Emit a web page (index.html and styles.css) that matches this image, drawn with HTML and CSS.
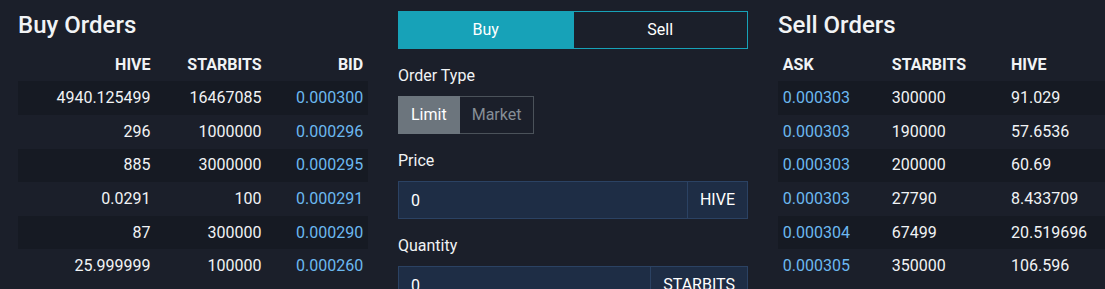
FILE: index.html
```html
<!DOCTYPE html>
<html lang="en">
<head>
    <meta charset="UTF-8">
    <meta name="viewport" content="width=device-width, initial-scale=1.0">
    <title>Market</title>
    <link rel="stylesheet" href="styles.css">
</head>
<body>
    <div class="market">
        <div class="col">
            <h4>Buy Orders</h4>
            <table class="orders orders-buy">
                <thead>
                    <tr><th>HIVE</th><th>STARBITS</th><th>BID</th></tr>
                </thead>
                <tbody>
                    <tr><td>4940.125499</td><td>16467085</td><td class="price">0.000300</td></tr>
                    <tr><td>296</td><td>1000000</td><td class="price">0.000296</td></tr>
                    <tr><td>885</td><td>3000000</td><td class="price">0.000295</td></tr>
                    <tr><td>0.0291</td><td>100</td><td class="price">0.000291</td></tr>
                    <tr><td>87</td><td>300000</td><td class="price">0.000290</td></tr>
                    <tr><td>25.999999</td><td>100000</td><td class="price">0.000260</td></tr>
                </tbody>
            </table>
        </div>

        <div class="col">
            <div class="btn-group btn-block">
                <button class="btn btn-info">Buy</button>
                <button class="btn btn-outline-info">Sell</button>
            </div>
            <div class="form-group">
                <label>Order Type</label>
                <div class="btn-group">
                    <button class="btn btn-secondary">Limit</button>
                    <button class="btn btn-outline-secondary">Market</button>
                </div>
            </div>
            <div class="form-group">
                <label for="price">Price</label>
                <div class="input-group">
                    <input type="text" id="price" class="form-control" value="0">
                    <span class="input-group-text">HIVE</span>
                </div>
            </div>
            <div class="form-group">
                <label for="quantity">Quantity</label>
                <div class="input-group">
                    <input type="text" id="quantity" class="form-control" value="0">
                    <span class="input-group-text">STARBITS</span>
                </div>
            </div>
        </div>

        <div class="col">
            <h4>Sell Orders</h4>
            <table class="orders orders-sell">
                <thead>
                    <tr><th>ASK</th><th>STARBITS</th><th>HIVE</th></tr>
                </thead>
                <tbody>
                    <tr><td class="price">0.000303</td><td>300000</td><td>91.029</td></tr>
                    <tr><td class="price">0.000303</td><td>190000</td><td>57.6536</td></tr>
                    <tr><td class="price">0.000303</td><td>200000</td><td>60.69</td></tr>
                    <tr><td class="price">0.000303</td><td>27790</td><td>8.433709</td></tr>
                    <tr><td class="price">0.000304</td><td>67499</td><td>20.519696</td></tr>
                    <tr><td class="price">0.000305</td><td>350000</td><td>106.596</td></tr>
                </tbody>
            </table>
        </div>
    </div>
</body>
</html>
```

FILE: styles.css
```css
* {
    box-sizing: border-box;
    margin: 0;
    padding: 0;
}
body {
    font-family: Roboto, "Liberation Sans", Arial, sans-serif;
    font-size: 16px;
    line-height: 1.5;
    background-color: #1b1f2a;
    color: #f1f3f5;
    overflow: hidden;
}
.market {
    display: flex;
    gap: 30px;
    width: 1140px;
    padding: 11px 0 0 18px;
}
.col {
    flex: 0 0 350px;
}
h4 {
    font-size: 24px;
    font-weight: 500;
    line-height: 1.2;
    margin-bottom: 8px;
    color: #f1f3f5;
}
.orders {
    width: 100%;
    border-collapse: collapse;
}
.orders th,
.orders td {
    padding: 4.8px;
    white-space: nowrap;
}
.orders th {
    font-weight: bold;
    text-transform: uppercase;
}
.orders tbody tr:nth-child(odd) {
    background-color: #161a23;
}
.orders-buy th,
.orders-buy td {
    text-align: right;
}
.orders-sell th,
.orders-sell td {
    text-align: left;
}
.price {
    color: #6cb8f0;
}
.btn-group {
    display: inline-flex;
}
.btn-block {
    display: flex;
    width: 100%;
    margin-bottom: 15px;
}
.btn-block .btn {
    flex: 1;
}
.btn {
    font-family: inherit;
    font-size: 16px;
    line-height: 1.5;
    padding: 6px 12px;
    border: 1px solid transparent;
    background: none;
    color: #fff;
    cursor: pointer;
}
.btn-info {
    background-color: #17a2b8;
    border-color: #17a2b8;
}
.btn-outline-info {
    border-color: #17a2b8;
    border-left: none;
}
.btn-secondary {
    background-color: #6c757d;
    border-color: #6c757d;
}
.btn-outline-secondary {
    border-color: #4b525a;
    border-left: none;
    color: #868e96;
}
.form-group {
    margin-bottom: 15px;
}
label {
    display: block;
    margin-bottom: 8px;
}
.input-group {
    display: flex;
}
.form-control {
    flex: 1;
    min-width: 0;
    height: 38px;
    padding: 6px 12px;
    font-family: inherit;
    font-size: 16px;
    color: #fff;
    background-color: #1e2d45;
    border: 1px solid #2b4263;
    outline: none;
}
.input-group-text {
    padding: 6px 12px;
    height: 38px;
    background-color: #1e2d45;
    border: 1px solid #2b4263;
    border-left: none;
    color: #fff;
}
```
